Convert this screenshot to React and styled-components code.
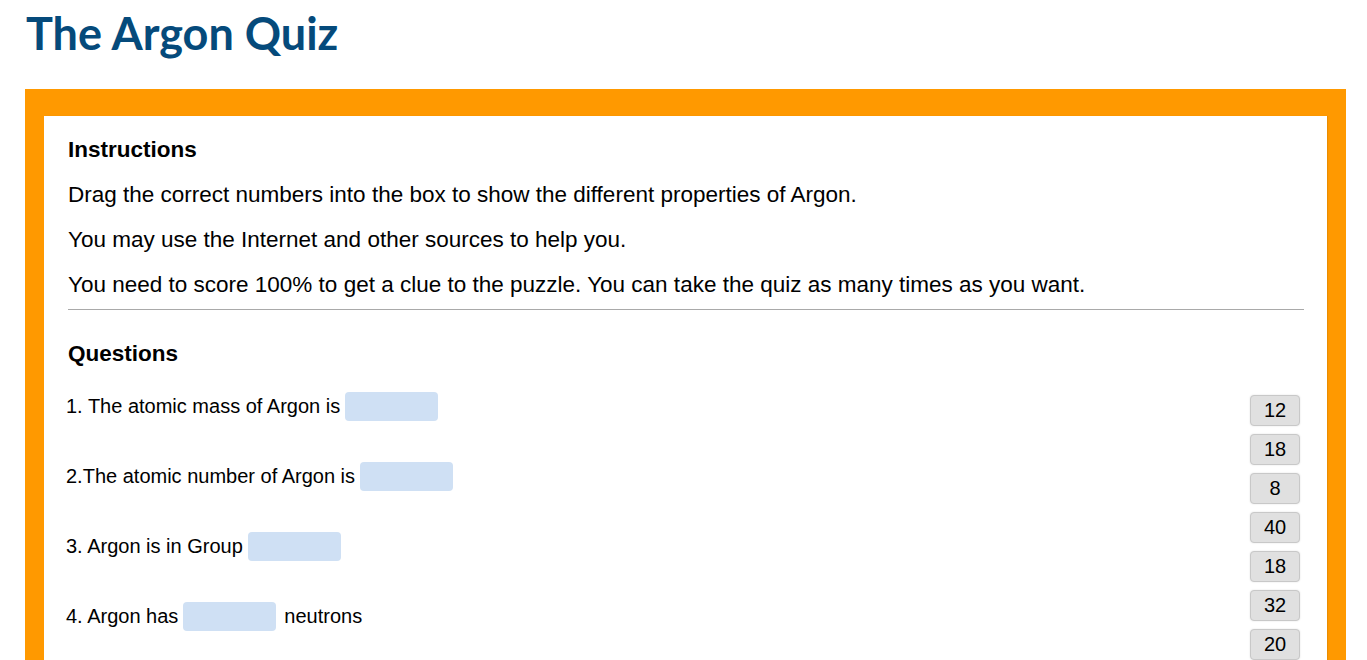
import styled, { createGlobalStyle } from "styled-components";

const GlobalStyle = createGlobalStyle`
  body {
    margin: 0;
    background: #ffffff;
    font-family: "Liberation Sans", Arial, sans-serif;
    color: #000000;
  }
`;

const questions = [
  { id: 1, before: "1. The atomic mass of Argon is", after: "" },
  { id: 2, before: "2.The atomic number of Argon is", after: "" },
  { id: 3, before: "3. Argon is in Group", after: "" },
  { id: 4, before: "4. Argon has", after: "neutrons" },
];

const numbers = ["12", "18", "8", "40", "18", "32", "20"];

const App = () => {
  return (
    <Page>
      <GlobalStyle />
      <Title>The Argon Quiz</Title>
      <Frame>
        <Panel>
          <Heading>Instructions</Heading>
          <Text>
            Drag the correct numbers into the box to show the different
            properties of Argon.
          </Text>
          <Text>You may use the Internet and other sources to help you.</Text>
          <Text>
            You need to score 100% to get a clue to the puzzle. You can take
            the quiz as many times as you want.
          </Text>
          <Rule />
          <Heading>Questions</Heading>
          <QuizArea>
            <QuestionList>
              {questions.map(({ id, before, after }) => (
                <Question key={id}>
                  <span>{before}</span>
                  <DropBox />
                  {after && <After>{after}</After>}
                </Question>
              ))}
            </QuestionList>
            <Tiles>
              {numbers.map((n, i) => (
                <Tile key={i}>{n}</Tile>
              ))}
            </Tiles>
          </QuizArea>
        </Panel>
      </Frame>
    </Page>
  );
};

export default App;

const Page = styled.div`
  padding: 6px 21px 0 25px;
`;

const Title = styled.h1`
  margin: 0 0 0 1px;
  font-family: Lato, "Open Sans", sans-serif;
  font-weight: 700;
  font-size: 45px;
  line-height: 54px;
  color: #054a7b;
`;

const Frame = styled.div`
  margin-top: 29px;
  background: #ff9900;
  padding: 27px 19px 0 19px;
`;

const Panel = styled.div`
  background: #ffffff;
  padding: 21px 23px 0 24px;
  min-height: 560px;
  box-shadow: 1px 0 1px rgba(0, 0, 0, 0.08);
`;

const Heading = styled.h2`
  margin: 0 0 19px;
  font-size: 22.5px;
  line-height: 26px;
  font-weight: 700;
`;

const Text = styled.p`
  margin: 0 0 19px;
  font-size: 22.5px;
  line-height: 26px;
  &:last-of-type {
    margin-bottom: 0;
  }
`;

const Rule = styled.hr`
  margin: 11px 0 31px;
  border: none;
  border-top: 1px solid #a9a9a9;
  height: 0;
`;

const QuizArea = styled.div`
  display: flex;
  justify-content: space-between;
  align-items: flex-start;
  margin-top: 24px;
`;

const QuestionList = styled.div`
  display: flex;
  flex-direction: column;
  gap: 40px;
  margin-left: -2px;
`;

const Question = styled.div`
  display: flex;
  align-items: center;
  height: 30px;
  font-size: 20px;
  white-space: nowrap;
`;

const DropBox = styled.span`
  display: inline-block;
  width: 93px;
  height: 29px;
  margin-left: 5px;
  border-radius: 4px;
  background: #cfe0f4;
`;

const After = styled.span`
  margin-left: 8px;
`;

const Tiles = styled.div`
  display: flex;
  flex-direction: column;
  gap: 8px;
  padding-top: 4px;
  margin-right: 4px;
`;

const Tile = styled.div`
  box-sizing: border-box;
  width: 50px;
  height: 31px;
  display: flex;
  align-items: center;
  justify-content: center;
  background: #e0e0e0;
  border: 1px solid #c8c8c8;
  border-radius: 4px;
  box-shadow: 0 0 2px rgba(0, 0, 0, 0.12);
  font-size: 20px;
`;
